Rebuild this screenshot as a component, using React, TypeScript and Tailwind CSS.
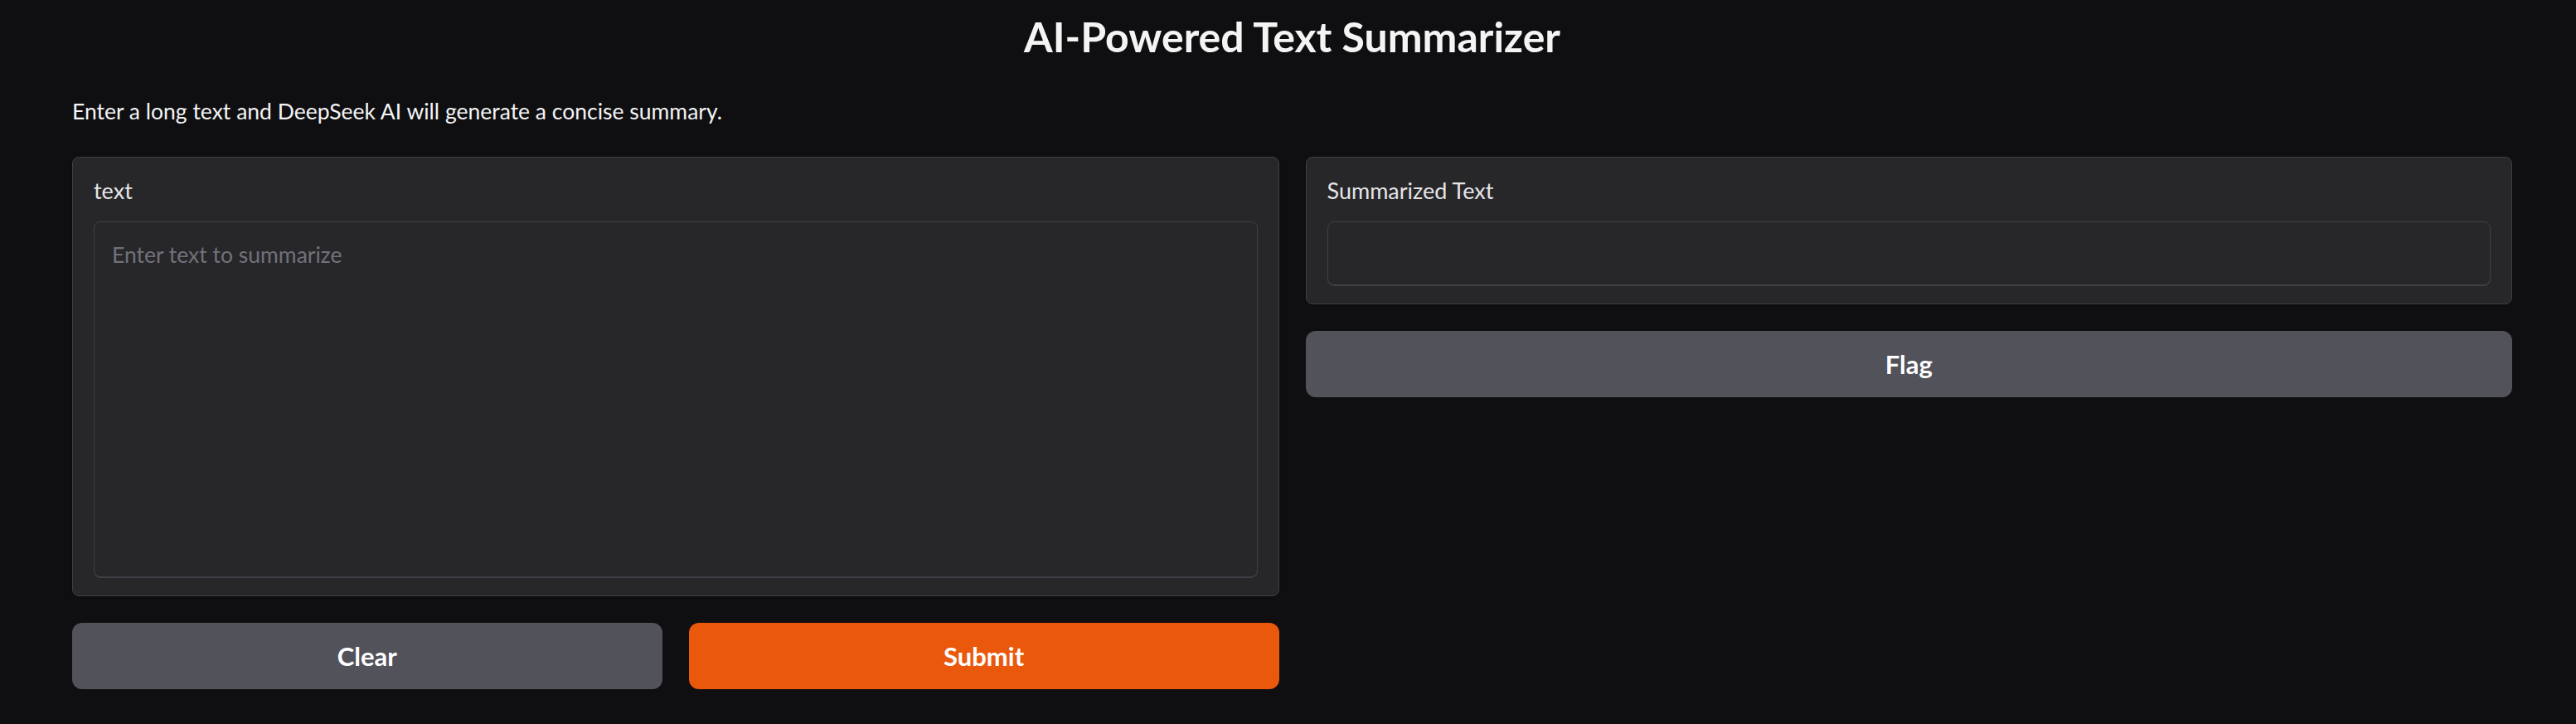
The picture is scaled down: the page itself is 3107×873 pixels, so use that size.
const font = "font-['Lato','Noto_Sans',sans-serif]";

const Block = ({
  label,
  placeholder,
  tall,
}: {
  label: string;
  placeholder?: string;
  tall?: boolean;
}) => {
  return (
    <div className="rounded-[8px] border border-[#3f3f46] bg-[#27272a] px-[25px] pb-[21px] pt-[25px] shadow-[0_1px_2px_rgba(0,0,0,0.3)]">
      <div className="text-[27px] leading-[30px] text-[#e4e4e7]">{label}</div>
      <div
        className={`${tall ? "h-[430px]" : "h-[78px]"} mt-[22px] rounded-[8px] border border-[#3f3f46] bg-[#27272a] px-[21px] pt-[19px] shadow-[inset_0_-1px_0_#3f3f46]`}
      >
        {placeholder && (
          <div className="text-[26.5px] leading-[40px] text-[#71717a]">
            {placeholder}
          </div>
        )}
      </div>
    </div>
  );
};

const Button = ({
  label,
  primary,
}: {
  label: string;
  primary?: boolean;
}) => {
  return (
    <button
      className={`${primary ? "bg-[#ea580c]" : "bg-[#52525b]"} flex h-[80px] w-full items-center justify-center rounded-[12px] text-[31px] font-bold text-white`}
    >
      {label}
    </button>
  );
};

export default function App() {
  return (
    <div
      className={`${font} min-h-screen w-full bg-[#0f0f11] pl-[87px] pr-[77px] pt-[14px] text-[#f4f4f5]`}
    >
      <h1 className="text-center text-[50px] font-bold leading-[60px]">
        AI-Powered Text Summarizer
      </h1>
      <p className="mt-[45px] text-[26.5px] leading-[30px]">
        Enter a long text and DeepSeek AI will generate a concise summary.
      </p>
      <div className="mt-[40px] flex gap-8">
        <div className="flex flex-1 flex-col gap-8">
          <Block label="text" placeholder="Enter text to summarize" tall />
          <div className="flex gap-8">
            <Button label="Clear" />
            <Button label="Submit" primary />
          </div>
        </div>
        <div className="flex flex-1 flex-col gap-8">
          <Block label="Summarized Text" />
          <Button label="Flag" />
        </div>
      </div>
    </div>
  );
}
